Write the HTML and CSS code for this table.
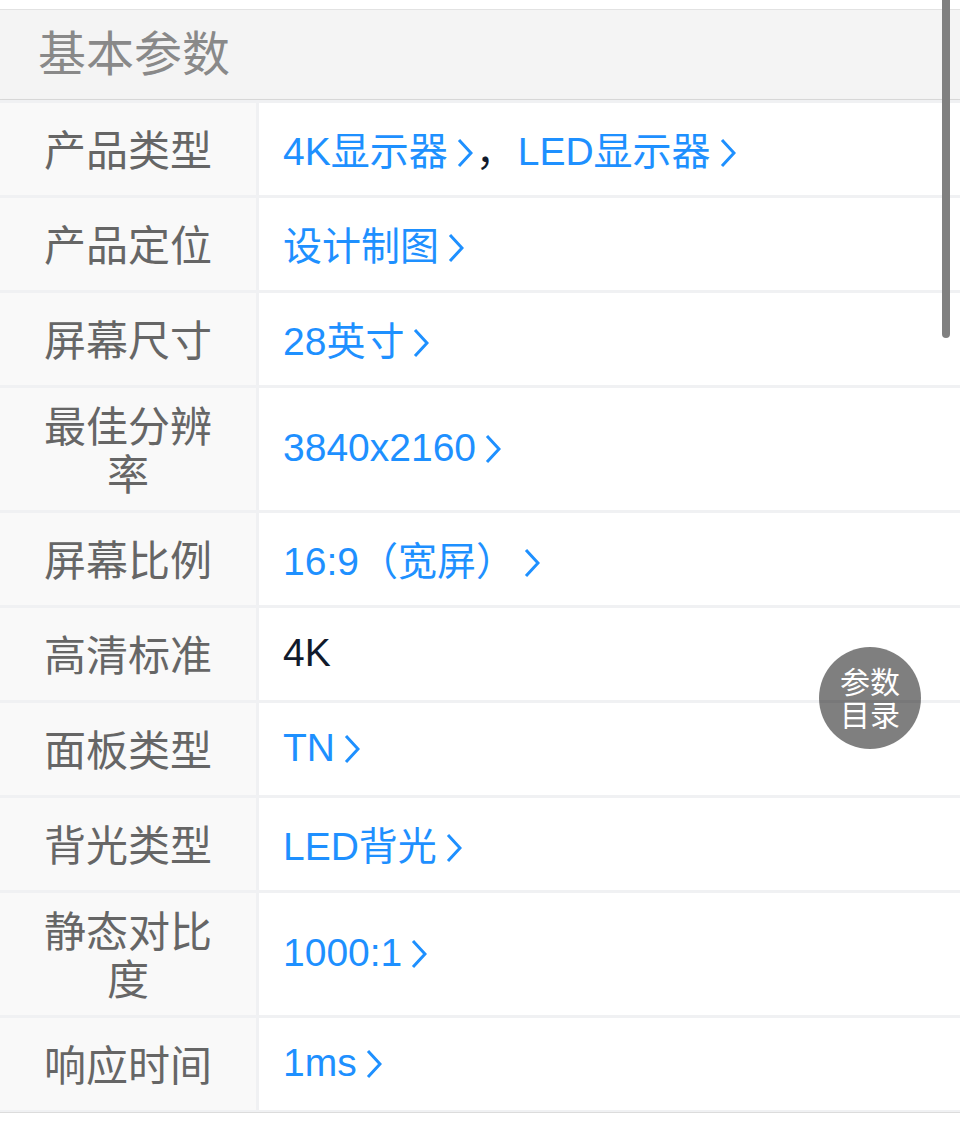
FILE: index.html
```html
<!DOCTYPE html>
<html lang="zh-CN">
<head>
    <meta charset="UTF-8">
    <meta name="viewport" content="width=device-width, initial-scale=1.0">
    <title>基本参数</title>
    <link rel="stylesheet" href="styles.css">
</head>
<body>
    <div class="page">
        <!-- 参数分组标题 -->
        <div class="group-title">基本参数</div>

        <!-- 参数表 -->
        <div class="param-list">
            <div class="param-row">
                <div class="param-name">产品类型</div>
                <div class="param-value">
                    <a class="link" href="#">4K显示器<svg class="arrow" viewBox="0 0 16 30"><polyline points="2,2 14,15 2,28"/></svg></a><span class="sep">，</span><a class="link" href="#">LED显示器<svg class="arrow" viewBox="0 0 16 30"><polyline points="2,2 14,15 2,28"/></svg></a>
                </div>
            </div>
            <div class="param-row">
                <div class="param-name">产品定位</div>
                <div class="param-value"><a class="link" href="#">设计制图<svg class="arrow" viewBox="0 0 16 30"><polyline points="2,2 14,15 2,28"/></svg></a></div>
            </div>
            <div class="param-row">
                <div class="param-name">屏幕尺寸</div>
                <div class="param-value"><a class="link" href="#">28英寸<svg class="arrow" viewBox="0 0 16 30"><polyline points="2,2 14,15 2,28"/></svg></a></div>
            </div>
            <div class="param-row">
                <div class="param-name">最佳分辨率</div>
                <div class="param-value"><a class="link" href="#">3840x2160<svg class="arrow" viewBox="0 0 16 30"><polyline points="2,2 14,15 2,28"/></svg></a></div>
            </div>
            <div class="param-row">
                <div class="param-name">屏幕比例</div>
                <div class="param-value"><a class="link" href="#">16:9（宽屏）<svg class="arrow" viewBox="0 0 16 30"><polyline points="2,2 14,15 2,28"/></svg></a></div>
            </div>
            <div class="param-row">
                <div class="param-name">高清标准</div>
                <div class="param-value"><span class="plain">4K</span></div>
            </div>
            <div class="param-row">
                <div class="param-name">面板类型</div>
                <div class="param-value"><a class="link" href="#">TN<svg class="arrow" viewBox="0 0 16 30"><polyline points="2,2 14,15 2,28"/></svg></a></div>
            </div>
            <div class="param-row">
                <div class="param-name">背光类型</div>
                <div class="param-value"><a class="link" href="#">LED背光<svg class="arrow" viewBox="0 0 16 30"><polyline points="2,2 14,15 2,28"/></svg></a></div>
            </div>
            <div class="param-row">
                <div class="param-name">静态对比度</div>
                <div class="param-value"><a class="link" href="#">1000:1<svg class="arrow" viewBox="0 0 16 30"><polyline points="2,2 14,15 2,28"/></svg></a></div>
            </div>
            <div class="param-row">
                <div class="param-name">响应时间</div>
                <div class="param-value"><a class="link" href="#">1ms<svg class="arrow" viewBox="0 0 16 30"><polyline points="2,2 14,15 2,28"/></svg></a></div>
            </div>
        </div>
    </div>

    <!-- 悬浮按钮 -->
    <a class="catalog-btn" href="#"><span>参数</span><span>目录</span></a>

    <!-- 滚动条 -->
    <div class="scroll-thumb"></div>
</body>
</html>
```

FILE: styles.css
```css
body {
    margin: 0;
    padding: 0;
    background: #fff;
    font-family: "Liberation Sans", "Noto Sans CJK SC", sans-serif;
    overflow: hidden;
}
.page {
    padding-top: 9px;
}
.group-title {
    height: 89px;
    line-height: 89px;
    padding-left: 38px;
    font-size: 48px;
    color: #898989;
    background: #f4f4f4;
    border-top: 1px solid #e2e2e2;
    border-bottom: 1px solid #d9d9d9;
}
.param-list {
    display: flex;
    flex-direction: column;
    gap: 3px;
    padding: 3px 0 2px;
    background: #f0f1f3;
    border-bottom: 1px solid #dcdcdc;
    box-shadow: 0 2px 5px rgba(0, 0, 0, 0.06);
}
.param-row {
    display: grid;
    grid-template-columns: 256px 1fr;
    column-gap: 3px;
    min-height: 92px;
}
.param-name {
    display: flex;
    align-items: center;
    justify-content: center;
    padding: 16px 40px 10px;
    font-size: 42px;
    line-height: 48px;
    color: #666;
    text-align: center;
    background: #f9f9f9;
}
.param-value {
    display: flex;
    align-items: center;
    padding: 0 24px 3px;
    font-size: 39px;
    background: #fff;
}
.link {
    color: #1e90ff;
    text-decoration: none;
    white-space: nowrap;
}
.arrow {
    width: 16px;
    height: 30px;
    margin-left: 9px;
    vertical-align: -3px;
    fill: none;
    stroke: #1e90ff;
    stroke-width: 3;
}
.sep {
    margin: 0 3px;
}
.sep,
.plain {
    color: #111a2c;
}
.catalog-btn {
    position: absolute;
    left: 819px;
    top: 647px;
    width: 102px;
    height: 102px;
    border-radius: 50%;
    display: flex;
    flex-direction: column;
    align-items: center;
    justify-content: center;
    font-family: "Noto Sans CJK SC", sans-serif;
    font-size: 30px;
    line-height: 35px;
    color: #fff;
    text-decoration: none;
    background: rgba(0, 0, 0, 0.5);
}
.catalog-btn span {
    display: block;
    height: 35px;
    margin-top: -2px;
}
.scroll-thumb {
    position: absolute;
    left: 942px;
    top: -6px;
    width: 8px;
    height: 344px;
    border-radius: 4px;
    background: #808080;
}
```
